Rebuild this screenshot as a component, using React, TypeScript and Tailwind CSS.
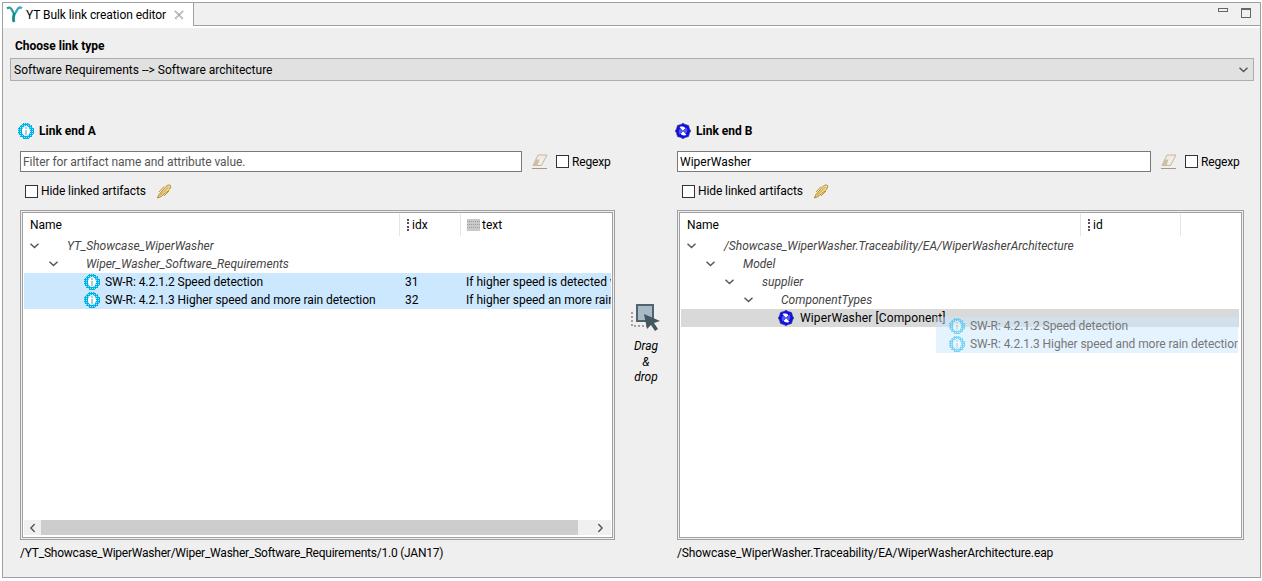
import React from 'react'

function ReqIcon({ faded = false }: { faded?: boolean }) {
  return (
    <svg width="16" height="16" viewBox="0 0 16 16" className={faded ? 'shrink-0 opacity-45' : 'shrink-0'} shapeRendering="crispEdges">
      <defs>
        <pattern id="dither" width="2" height="2" patternUnits="userSpaceOnUse">
          <rect width="2" height="2" fill="#00aeea" />
          <rect width="1" height="1" fill="#8fe6f8" />
        </pattern>
      </defs>
      <circle cx="8" cy="8" r="8" fill="url(#dither)" />
      <ellipse cx="8" cy="8" rx="4" ry="5" fill="#fff" shapeRendering="auto" />
      <rect x="7" y="4" width="2" height="2" fill="#a9cddb" />
      <rect x="7" y="7" width="2" height="5" fill="#a9cddb" />
    </svg>
  )
}

function ComponentIcon() {
  return (
    <svg width="16" height="16" viewBox="0 0 16 16" className="shrink-0">
      <path d="M8 0.3L10 1.5L13.5 2.5L14.5 6L15.7 8L14.5 10L13.5 13.5L10 14.5L8 15.7L6 14.5L2.5 13.5L1.5 10L0.3 8L1.5 6L2.5 2.5L6 1.5Z" fill="#1010e0" stroke="#34348c" strokeWidth="0.7" />
      <path d="M4.5 4C7 3 9.5 3.5 10.5 5.5C9.3 6 8.5 6.8 8 8C6.8 6.8 5.5 5.5 4.5 4Z" fill="#fff" />
      <path d="M11.5 4.5C12.8 7 12.5 9.5 10.5 10.5C10 9.3 9.2 8.5 8 8C9.2 6.8 10.5 5.5 11.5 4.5Z" fill="#5a5af0" />
      <path d="M11.5 12C9 13 6.5 12.5 5.5 10.5C6.7 10 7.5 9.2 8 8C9.2 9.2 10.5 10.5 11.5 12Z" fill="#fff" />
      <path d="M4.5 11.5C3.2 9 3.5 6.5 5.5 5.5C6 6.7 6.8 7.5 8 8C6.8 9.2 5.5 10.5 4.5 11.5Z" fill="#5a5af0" />
    </svg>
  )
}

function EraserIcon() {
  return (
    <svg width="18" height="16" viewBox="0 0 18 16" className="shrink-0">
      <path d="M7 1H16L10.5 11.5H2Z" fill="#f1ece4" stroke="#c4b6a2" strokeWidth="1" />
      <path d="M4.5 5.5H8.5L6.5 11.5H2Z" fill="#cfbfa8" />
      <path d="M1 14.5H16" stroke="#a89882" strokeWidth="1" />
    </svg>
  )
}

function ChainIcon() {
  return (
    <svg width="16" height="16" viewBox="0 0 16 16" className="shrink-0" fill="none">
      <path d="M1.5 15L3 11.5L10 3.5C11.5 2 13.5 1.5 14.5 2.5C15 4 14 6 12.5 7.5L5 13.5Z" fill="#f3dd9c" stroke="#b58526" strokeWidth="1" />
      <path d="M4 12.5L12.5 4M3 9L8 3.5M8 13L13 8" stroke="#c2922c" strokeWidth="1" />
    </svg>
  )
}

function DragIcon() {
  return (
    <svg width="30" height="28" viewBox="0 0 30 28" className="shrink-0">
      <path d="M1 8V22H16" fill="none" stroke="#555" strokeWidth="1" strokeDasharray="2 2" />
      <rect x="6" y="1" width="16" height="16" fill="#a7bac6" stroke="#51636e" strokeWidth="2" />
      <path d="M13 10L29 17L23 19L27 25L24 27L20 21L16 25Z" fill="#45585f" />
    </svg>
  )
}

function AttrIcon() {
  return <span className="h-[12px] w-[2px] shrink-0 border-l-2 border-dotted border-[#5a4a6a]" />
}

function TextAttrIcon() {
  return (
    <svg width="13" height="12" viewBox="0 0 13 12" className="shrink-0">
      <rect width="13" height="12" fill="#c9c9c9" />
      <path d="M0 2.5H13M0 5.5H13M0 8.5H13" stroke="#9a9aa5" strokeWidth="1" strokeDasharray="1 1" />
    </svg>
  )
}

function Chevron({ className = '' }: { className?: string }) {
  return (
    <svg width="9" height="6" viewBox="0 0 9 6" className={className} fill="none">
      <path d="M0.5 0.8L4.5 4.6L8.5 0.8" stroke="#555" strokeWidth="1.4" />
    </svg>
  )
}

function Check({ label, className = '' }: { label: string; className?: string }) {
  return (
    <label className="flex items-center gap-[3px]">
      <span className="h-[13px] w-[13px] border border-[#333] bg-white" />
      <span className={className}>{label}</span>
    </label>
  )
}

function TreeGroup({ indent, label }: { indent: number; label: string }) {
  return (
    <div className="relative flex h-[18px] items-center italic text-[#444] whitespace-nowrap" style={{ paddingLeft: indent }}>
      <Chevron className="absolute" />
      <span className="ml-[37px]">{label}</span>
    </div>
  )
}

function Filter({ value, placeholder, width }: { value?: string; placeholder?: string; width: string }) {
  return (
    <div className="flex items-center">
      <div className={`flex h-[21px] items-center border border-[#7a7a7a] bg-white px-[2px] ${width}`}>
        {value ? <span>{value}</span> : <span className="tracking-[-0.05px] text-[#555]">{placeholder}</span>}
      </div>
      <span className="ml-[9px]"><EraserIcon /></span>
      <span className="ml-[7px]"><Check label="Regexp" className="tracking-[-0.15px]" /></span>
    </div>
  )
}

function HideRow() {
  return (
    <div className="mt-[11px] ml-[5px] flex h-[16px] items-center">
      <Check label="Hide linked artifacts" className="tracking-[-0.1px]" />
      <span className="ml-[10px]"><ChainIcon /></span>
    </div>
  )
}

function Frame({ children }: { children: React.ReactNode }) {
  return (
    <div className="mt-[11px] h-[330px] border border-[#a0a0a0] bg-[#f0f0f0] p-px">
      <div className="relative flex h-full flex-col overflow-hidden border border-[#a0a0a0] bg-white">{children}</div>
    </div>
  )
}

function LeftTable() {
  const rows = [
    { name: 'SW-R: 4.2.1.2 Speed detection', idx: '31', text: 'If higher speed is detected v' },
    { name: 'SW-R: 4.2.1.3 Higher speed and more rain detection', idx: '32', text: 'If higher speed an more rain' },
  ]
  return (
    <Frame>
      <div className="flex h-[24px] shrink-0 items-center pl-[7px]">
        <span className="w-[370px] border-r border-[#e5e5e5] leading-[22px]">Name</span>
        <span className="flex w-[61px] items-center gap-[3px] border-r border-[#e5e5e5] pl-[7px] leading-[22px]"><AttrIcon />idx</span>
        <span className="flex items-center gap-[2px] pl-[6px]"><TextAttrIcon />text</span>
      </div>
      <TreeGroup indent={7} label="YT_Showcase_WiperWasher" />
      <TreeGroup indent={26} label="Wiper_Washer_Software_Requirements" />
      {rows.map((r) => (
        <div key={r.idx} className="ml-px mr-px flex h-[18px] items-center bg-[#cce8ff]">
          <div className="flex w-[381px] items-center gap-[5px] pl-[60px]">
            <ReqIcon />
            <span className="whitespace-nowrap tracking-[-0.06px]">{r.name}</span>
          </div>
          <span className="w-[61px]">{r.idx}</span>
          <span className="w-[145px] overflow-hidden whitespace-nowrap">{r.text}</span>
        </div>
      ))}
      <div className="mt-auto mb-[2px] ml-px mr-px flex h-[15px] shrink-0 items-center bg-[#f0f0f0]">
        <span className="flex w-[17px] justify-center"><Chevron className="rotate-90" /></span>
        <span className="h-full w-[537px] bg-[#cdcdcd]" />
        <span className="flex flex-1 justify-center pl-[12px]"><Chevron className="-rotate-90" /></span>
      </div>
    </Frame>
  )
}

function RightTable() {
  return (
    <Frame>
      <div className="flex h-[24px] shrink-0 items-center pl-[7px]">
        <span className="w-[394px] border-r border-[#e5e5e5] leading-[22px]">Name</span>
        <span className="flex w-[100px] items-center gap-[3px] border-r border-[#e5e5e5] pl-[7px] leading-[22px]"><AttrIcon />id</span>
      </div>
      <TreeGroup indent={7} label="/Showcase_WiperWasher.Traceability/EA/WiperWasherArchitecture" />
      <TreeGroup indent={26} label="Model" />
      <TreeGroup indent={45} label="supplier" />
      <TreeGroup indent={64} label="ComponentTypes" />
      <div className="mr-[2px] ml-px flex h-[18px] items-center gap-[6px] bg-[#d9d9d9] pl-[97px]">
        <ComponentIcon />
        <span className="whitespace-nowrap tracking-[0.13px]">WiperWasher [Component]</span>
      </div>
      {/* drag image following the cursor */}
      <div className="absolute top-[104px] left-[256px] w-[302px] overflow-hidden text-[#777]">
        {['SW-R: 4.2.1.2 Speed detection', 'SW-R: 4.2.1.3 Higher speed and more rain detection'].map((t) => (
          <div key={t} className="flex h-[18px] items-center gap-[5px] bg-[#cce8ff]/50 pl-[13px] whitespace-nowrap tracking-[-0.06px]">
            <ReqIcon faded />
            {t}
          </div>
        ))}
      </div>
    </Frame>
  )
}

export default function App() {
  return (
    <div
      className="h-[581px] w-[1262px] overflow-hidden bg-white pt-[2px] pr-px pb-[3px] pl-[2px] text-[12px] leading-[16px] text-black"
      style={{ fontFamily: 'Roboto, "Noto Sans", sans-serif' }}
    >
      <div className="flex h-full flex-col border border-[#a0a0a0]">
        {/* Tab bar */}
        <div className="flex h-[23px] shrink-0 items-start justify-between border-b border-[#a0a0a0] bg-[#f0f0f0]">
          <div className="-mb-px flex h-[23px] w-[191px] items-center border-r border-[#a0a0a0] bg-white pl-[3px]">
            <svg width="17" height="17" viewBox="0 0 17 17" fill="none">
              <path d="M1 2.5C3 1 5 1.5 6 4C6.8 6 7.5 7 8.5 8" stroke="#2f9f9a" strokeWidth="2.2" />
              <path d="M16 2C14 1 12 2 11 4C10.2 6 9.5 7 8.5 8" stroke="#38a8c0" strokeWidth="2.2" />
              <path d="M8.5 7C7.5 10 6.8 13 8 16" stroke="#128a86" strokeWidth="2.8" />
            </svg>
            <span className="ml-[3px] whitespace-nowrap tracking-[-0.07px]">YT Bulk link creation editor</span>
            <svg width="10" height="10" viewBox="0 0 10 10" className="ml-[8px]" fill="none">
              <path d="M1 1L9 9M9 1L1 9" stroke="#aaa" strokeWidth="2" strokeDasharray="1.4 0.5" />
            </svg>
          </div>
          <div className="flex items-start gap-[13px] pt-[5px] pr-[9px]">
            <span className="h-[4px] w-[10px] border border-[#666]" />
            <span className="h-[10px] w-[10px] border border-t-2 border-[#666]" />
          </div>
        </div>

        {/* Editor body */}
        <div className="flex min-h-0 flex-1 flex-col border-t-2 border-white bg-[#efefef] pt-[10px] pr-[6px] pl-[7px]">
          <div className="pl-[5px] font-bold">Choose link type</div>
          <div className="mt-[4px] flex h-[23px] items-center justify-between border border-[#adadad] bg-[#e1e1e1] pr-[5px] pl-[3px]">
            <span>Software Requirements --&gt; Software architecture</span>
            <Chevron />
          </div>

          <div className="mt-[41px] flex pl-[10px]">
            {/* Link end A */}
            <div className="w-[595px]">
              <div className="-ml-[2px] flex h-[18px] items-center gap-[5px] font-bold">
                <ReqIcon />
                Link end A
              </div>
              <div className="mt-[11px]">
                <Filter placeholder="Filter for artifact name and attribute value." width="w-[502px]" />
              </div>
              <HideRow />
              <LeftTable />
              <div className="mt-[5px] tracking-[-0.23px] whitespace-nowrap">/YT_Showcase_WiperWasher/Wiper_Washer_Software_Requirements/1.0 (JAN17)</div>
            </div>

            {/* Drag and drop hint */}
            <div className="flex w-[62px] flex-col items-center pt-[182px] italic">
              <DragIcon />
              <div className="mt-[7px] text-center leading-[15.5px]">Drag<br />&amp;<br />drop</div>
            </div>

            {/* Link end B */}
            <div className="w-[567px]">
              <div className="-ml-[2px] flex h-[18px] items-center gap-[5px] font-bold">
                <ComponentIcon />
                Link end B
              </div>
              <div className="mt-[11px]">
                <Filter value="WiperWasher" width="w-[474px]" />
              </div>
              <HideRow />
              <RightTable />
              <div className="mt-[5px] tracking-[-0.11px] whitespace-nowrap">/Showcase_WiperWasher.Traceability/EA/WiperWasherArchitecture.eap</div>
            </div>
          </div>
        </div>
      </div>
    </div>
  )
}
